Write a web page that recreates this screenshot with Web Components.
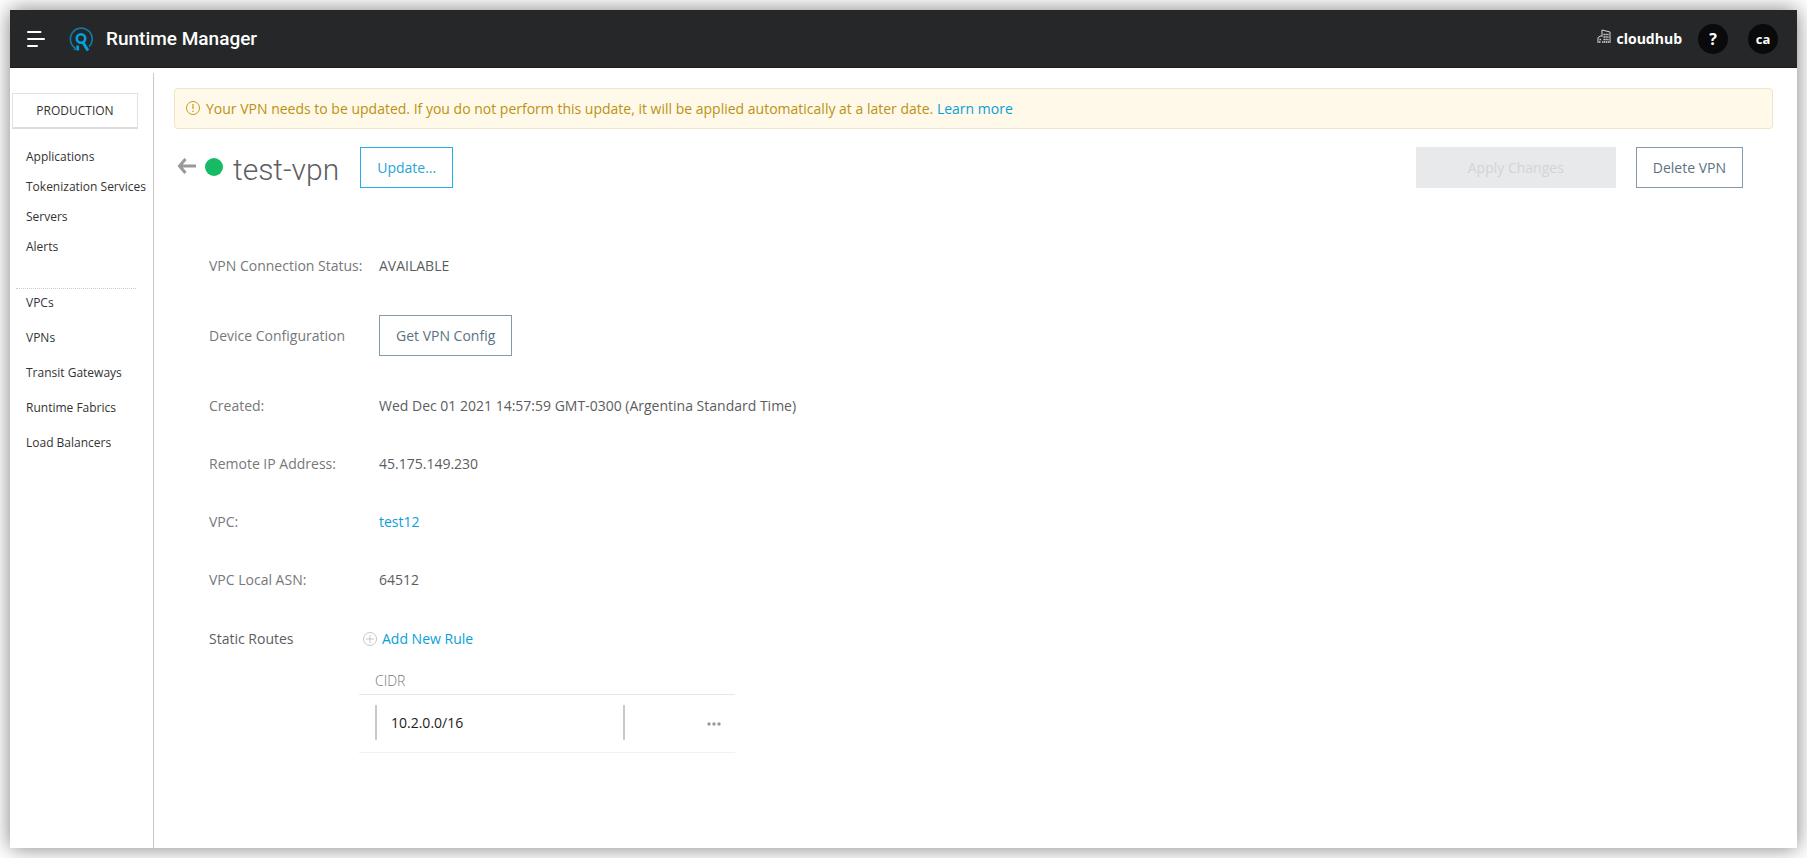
<!DOCTYPE html>
<html lang="en">
<head>
<meta charset="utf-8">
<title>Runtime Manager</title>
<style>
  html { background: #fff; }
  body { margin: 0; font-family: "Open Sans", "Noto Sans", sans-serif; font-size: 14px; line-height: 20px; color: #5c5d5f; }
</style>
</head>
<body>
<runtime-app></runtime-app>

<script>
function define(name, html) {
  const template = document.createElement('template');
  template.innerHTML = html;
  customElements.define(name, class extends HTMLElement {
    constructor() {
      super();
      this.attachShadow({ mode: 'open' }).append(template.content.cloneNode(true));
    }
  });
}

/* Outlined push button; the variant attribute picks its colours */
customElements.define('action-button', class extends HTMLElement {
  connectedCallback() {
    if (this.shadowRoot) return;
    this.attachShadow({ mode: 'open' }).innerHTML = `
      <style>
        :host { display: inline-block; }
        button { display: block; box-sizing: border-box; width: 100%; height: 41px; padding: 0 16px;
          border: 1px solid #7f9bab; background: #fff; color: #5b7282;
          font: inherit; line-height: 20px; white-space: nowrap; }
        :host([variant="primary"]) button { border-color: #1fb0e6; color: #26a5d8; }
        button:disabled { border-color: #e8e9eb; background: #e8e9eb; color: #d2d4d6; }
      </style>
      <button type="button"${this.hasAttribute('disabled') ? ' disabled' : ''}><slot></slot></button>`;
  }
});

define('app-header', `
  <style>
    :host { display: flex; align-items: center; height: 58px; box-sizing: border-box; padding: 0 19px 0 17px;
      background: #262728; color: #fff; border-bottom: 1px solid #1b1c1d; }
    button { border: 0; padding: 0; background: none; color: inherit; font: inherit; display: block; }
    svg { display: block; }
    .logo { margin-left: 24px; }
    h1 { margin: 0 auto 0 13px; font: 500 19px/24px Roboto, sans-serif; }
    .org { display: flex; align-items: center; gap: 6px; font-weight: 700; font-size: 14px; margin-right: 16px; }
    .org svg { margin-bottom: 4px; }
    .round { width: 30px; height: 30px; border-radius: 50%; background: #0a0a0a; font-weight: 700; font-size: 13px; line-height: 30px; text-align: center; }
    .round + .round { margin-left: 20px; }
    .help { font-size: 16px; }
  </style>
  <button type="button" aria-label="Menu">
    <svg width="18" height="18" viewBox="0 0 18 18" fill="none" stroke="#fff" stroke-width="2" stroke-linecap="round"><path d="M1 2h12.500M1 9h16M1 16h9"/></svg>
  </button>
  <svg class="logo" width="24" height="24" viewBox="0 0 24 24" fill="none">
    <path d="M7 21.600A10.900 10.900 0 1 1 20 19.800" stroke="#0e7dac" stroke-width="1.600"/>
    <circle cx="12" cy="11.500" r="4.200" stroke="#00a2df" stroke-width="2.600"/>
    <path d="M13.800 15.300L19 23.500" stroke="#00a2df" stroke-width="2.900"/>
    <path d="M8.700 18.500v5" stroke="#00a2df" stroke-width="2.600"/>
    <path d="M4.500 22.300h3" stroke="#0e7dac" stroke-width="1.200"/>
  </svg>
  <h1>Runtime Manager</h1>
  <button class="org" type="button">
    <svg width="14" height="15" viewBox="0 0 14 15" fill="none" stroke="#d8d8d8"><path d="M1 14V8.500L4.500 6.500M5 8V1l8 2v11"/><path d="M6.500 5.500h5M6.500 8h5M6.500 10.500h5M5 13h7M2.500 10.500h2M2 13h2" stroke-width="1.400" stroke-dasharray="1.400 .5"/></svg>
    cloudhub</button>
  <button class="round help" type="button">?</button>
  <button class="round" type="button">ca</button>
`);

define('side-nav', `
  <style>
    :host { display: block; width: 144px; flex: none; box-sizing: border-box; margin-top: 5px; padding: 20px 0 0 2px;
      border-right: 1px solid #c9c9c9; font-size: 12px; color: #333; }
    .env { display: block; box-sizing: border-box; width: 126px; height: 36px; border: 1px solid #e2e2e2; border-bottom: 2px solid #dcdcdc;
      background: #fff; color: #333; font: inherit; padding: 0; }
    ul { list-style: none; margin: 0; padding: 0 0 0 14px; }
    a { color: inherit; text-decoration: none; display: block; white-space: nowrap; }
    .main { padding-top: 13px; padding-bottom: 26px; }
    .main a { line-height: 30px; }
    hr { margin: 0 0 0 4px; width: 120px; border: 0; border-top: 1px dotted #ccc; }
    .net { margin-top: -4px; }
    .net a { line-height: 35px; }
  </style>
  <button class="env" type="button">PRODUCTION</button>
  <nav>
    <ul class="main">
      <li><a href="#">Applications</a></li>
      <li><a href="#">Tokenization Services</a></li>
      <li><a href="#">Servers</a></li>
      <li><a href="#">Alerts</a></li>
    </ul>
    <hr>
    <ul class="net">
      <li><a href="#">VPCs</a></li>
      <li><a href="#">VPNs</a></li>
      <li><a href="#">Transit Gateways</a></li>
      <li><a href="#">Runtime Fabrics</a></li>
      <li><a href="#">Load Balancers</a></li>
    </ul>
  </nav>
`);

define('notice-bar', `
  <style>
    :host { display: flex; align-items: center; gap: 6px; box-sizing: border-box; min-height: 41px; padding: 0 11px;
      border: 1px solid #efe5c8; border-radius: 4px; background: #fff9e9; color: #bb9113; }
    svg { flex: none; margin-bottom: 2px; }
    ::slotted(a) { color: #079fdb; text-decoration: none; }
  </style>
  <svg width="14" height="14" viewBox="0 0 14 14" fill="none" stroke="#c29a22"><circle cx="7" cy="7" r="6.500"/><path d="M7 3v5M7 9.500v1.500" stroke-width="1.200"/></svg>
  <div><slot></slot></div>
`);

define('page-heading', `
  <style>
    :host { display: flex; align-items: center; margin: 18px 30px 0 0; }
    a { display: block; margin: 0 0 4px 3px; }
    svg { display: block; }
    .dot { width: 18px; height: 18px; border-radius: 50%; background: #17bb66; margin: 0 10px 2px 9px; }
    h2 { margin: 4px 0 0; font: 300 30px/36px Roboto, sans-serif; color: #5f6062; }
    .update { margin-left: 21px; }
    .apply { margin-left: auto; width: 200px; }
    .delete { margin-left: 20px; }
  </style>
  <a href="#" aria-label="Back"><svg width="19" height="16" viewBox="0 0 19 16" fill="none" stroke="#999" stroke-width="3"><path d="M8.500 1L2.500 8L8.500 15M2.500 8H19"/></svg></a>
  <span class="dot"></span>
  <h2>test-vpn</h2>
  <action-button class="update" variant="primary">Update...</action-button>
  <action-button class="apply" disabled>Apply Changes</action-button>
  <action-button class="delete">Delete VPN</action-button>
`);

define('detail-row', `
  <style>
    :host { display: grid; grid-template-columns: 170px 1fr; align-items: center; color: #5c5d5f; }
    .label { color: #77787a; }
    ::slotted(a) { color: #079fdb; text-decoration: none; }
  </style>
  <div class="label"><slot name="label"></slot></div>
  <div><slot></slot></div>
`);

define('static-routes', `
  <style>
    :host { display: grid; grid-template-columns: 150px 1fr; margin-top: 1px; }
    .add { display: flex; align-items: center; gap: 5px; margin-left: 4px; border: 0; padding: 0; background: none; color: #079fdb; font: inherit; }
    .add svg { display: block; }
    table { border-collapse: collapse; width: 376px; margin-top: 20px; table-layout: fixed; }
    th { height: 24px; padding: 0 0 1px 16px; border-bottom: 1px solid #e8e8e8; text-align: left; font-weight: 300; color: #77787a; }
    td { height: 55px; padding: 0; border-bottom: 1px solid #f1f1f1; }
    td:first-child { padding: 0 0 2px 16px; }
    input { display: block; box-sizing: border-box; width: 250px; height: 35px; padding: 0 14px; border: solid #c9c9c9; border-width: 0 2px; background: none;
      font: inherit; color: #222; }
    td button { display: block; margin: 0 14px 0 auto; border: 0; padding: 0; background: none; }
    td svg { display: block; }
  </style>
  <div>Static Routes</div>
  <div>
    <button class="add" type="button">
      <svg width="14" height="14" viewBox="0 0 14 14" fill="none" stroke="#c6c6c6"><circle cx="7" cy="7" r="6.500"/><path d="M7 3v8M3 7h8"/></svg>
      Add New Rule</button>
    <table>
      <colgroup><col style="width:280px"><col></colgroup>
      <thead><tr><th colspan="2" id="cidr">CIDR</th></tr></thead>
      <tbody><tr>
        <td><input type="text" value="10.2.0.0/16" aria-labelledby="cidr"></td>
        <td><button type="button" aria-label="More actions"><svg width="14" height="4" viewBox="0 0 14 4" fill="#999"><circle cx="2" cy="2" r="1.700"/><circle cx="7" cy="2" r="1.700"/><circle cx="12" cy="2" r="1.700"/></svg></button></td>
      </tr></tbody>
    </table>
  </div>
`);

define('vpn-details', `
  <style>
    :host { display: flex; flex-direction: column; gap: 38px; padding: 68px 0 80px 35px; }
    .wide { margin: 1px 0 2px; }
  </style>
  <detail-row><span slot="label">VPN Connection Status:</span>AVAILABLE</detail-row>
  <detail-row class="wide"><span slot="label">Device Configuration</span><action-button>Get VPN Config</action-button></detail-row>
  <detail-row><span slot="label">Created:</span>Wed Dec 01 2021 14:57:59 GMT-0300 (Argentina Standard Time)</detail-row>
  <detail-row><span slot="label">Remote IP Address:</span>45.175.149.230</detail-row>
  <detail-row><span slot="label">VPC:</span><a href="#">test12</a></detail-row>
  <detail-row><span slot="label">VPC Local ASN:</span>64512</detail-row>
  <static-routes></static-routes>
`);

define('runtime-app', `
  <style>
    :host { display: flex; flex-direction: column; box-sizing: border-box; min-height: calc(100vh - 20px); margin: 10px;
      background: #fff; box-shadow: 0 0 20px rgba(0, 0, 0, .5); }
    .body { display: flex; flex: 1; }
    main { flex: 1; min-width: 0; padding: 20px 24px 0 20px; }
  </style>
  <app-header></app-header>
  <div class="body">
    <side-nav></side-nav>
    <main>
      <notice-bar>Your VPN needs to be updated. If you do not perform this update, it will be applied automatically at a later date. <a href="#">Learn more</a></notice-bar>
      <page-heading></page-heading>
      <vpn-details></vpn-details>
    </main>
  </div>
`);
</script>
</body>
</html>
